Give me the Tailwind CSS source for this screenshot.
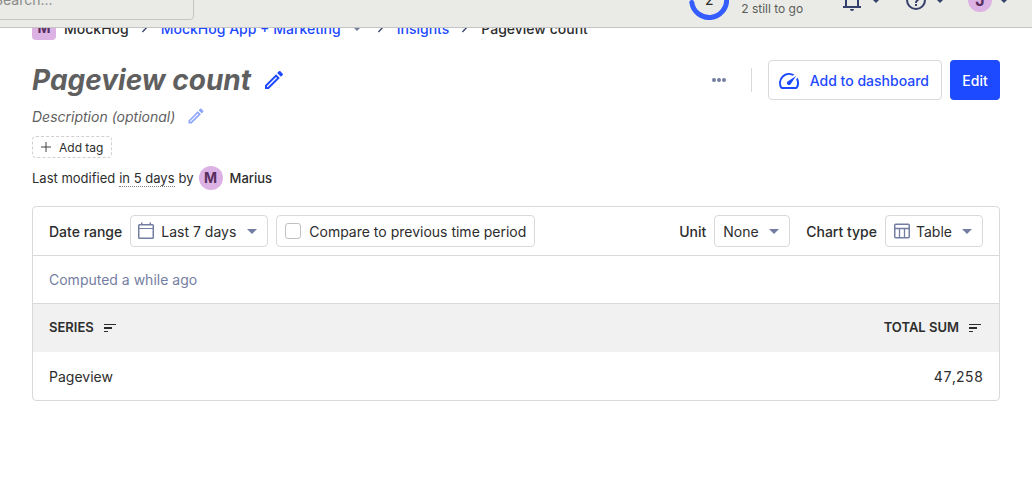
<!DOCTYPE html>
<html lang="en">
<head>
<meta charset="utf-8">
<meta name="viewport" content="width=device-width, initial-scale=1">
<title>Pageview count</title>
<script src="https://cdn.jsdelivr.net/npm/@tailwindcss/browser@4"></script>
</head>
<body class="bg-white font-['Inter',sans-serif] text-sm text-[#2d2d2d]">
<svg class="hidden">
  <symbol id="caret" viewBox="0 0 24 24"><path d="M7 10l5 5 5-5z" fill="currentColor"/></symbol>
  <symbol id="chevron" viewBox="0 0 24 24"><path d="M9 15.500L13.200 11 9 6.500l.9-1 5.100 5.500-5.100 5.500z" fill="currentColor"/></symbol>
  <symbol id="pencil" viewBox="0 0 24 24"><path d="M14.06 9.02l.92.92L5.92 19H5v-.92l9.06-9.06M17.66 3c-.25 0-.51.1-.7.29l-1.83 1.83 3.75 3.75 1.83-1.83c.39-.39.39-1.02 0-1.41l-2.34-2.34c-.2-.2-.45-.29-.71-.29zm-3.6 3.19L3 17.25V21h3.75L17.81 9.94l-3.75-3.75z" fill="currentColor"/></symbol>
  <symbol id="sort" viewBox="0 0 12 8"><path d="M0 0h12v1H0zM0 3h8v2H0zM0 7h4v1H0z" fill="currentColor"/></symbol>
</svg>

<header class="flex h-7 items-end overflow-hidden border-b border-[#c3c4c4] bg-[#eaebe6]">
  <div class="flex h-[54px] w-full shrink-0 items-center pr-4">
    <input type="search" aria-label="Search" placeholder="Search..." class="-ml-14 h-10 w-[250px] rounded border border-[#c3c4c4] pb-px pl-[49px] text-sm placeholder:text-[#8a8b88]">
    <div class="ml-auto flex items-center">
      <div class="relative size-10">
        <svg viewBox="0 0 40 40" class="size-10" fill="none" stroke="#345cff" stroke-width="5" stroke-linecap="round"><path d="M2.8 22.5A17.5 17.5 0 1 0 20 2.5"/></svg>
        <span class="absolute inset-0 flex items-center justify-center text-sm">2</span>
      </div>
      <div class="mt-[2px] ml-3 flex flex-col text-xs leading-4 text-[#5a5b59]"><span class="font-semibold">Get started</span><span>2 still to go</span></div>
      <button aria-label="Notifications" class="ml-[34px] flex items-center text-[#35416b]">
        <svg viewBox="0 0 24 24" class="size-6"><path d="M5 8a7 7 0 0 1 14 0v10h2v2H3v-2h2zm2 10h10V8A5 5 0 0 0 7 8zM10 21h4a2 2 0 0 1-4 0z" fill="currentColor"/></svg>
        <svg class="size-6"><use href="#caret"/></svg>
      </button>
      <button aria-label="Help" class="ml-4 flex items-center text-[#35416b]">
        <svg viewBox="0 0 24 24" class="size-6"><path d="M11 18h2v-2h-2zM12 2a10 10 0 1 0 0 20 10 10 0 0 0 0-20zm0 18a8 8 0 1 1 0-16 8 8 0 0 1 0 16zm0-14a4 4 0 0 0-4 4h2a2 2 0 1 1 4 0c0 2-3 1.750-3 5h2c0-2.250 3-2.500 3-5a4 4 0 0 0-4-4z" fill="currentColor"/></svg>
        <svg class="size-6"><use href="#caret"/></svg>
      </button>
      <button aria-label="Account" class="ml-4 flex items-center text-[#35416b]">
        <span class="flex size-6 items-center justify-center rounded-full bg-[#dcb1e3] text-base font-bold text-[#572e5e]">J</span>
        <svg class="size-6"><use href="#caret"/></svg>
      </button>
    </div>
  </div>
</header>

<main class="px-8">
  <div class="flex h-3 items-end overflow-hidden">
    <nav aria-label="Breadcrumb" class="flex h-6 shrink-0 items-center font-medium">
      <span class="mr-2 flex size-6 items-center justify-center rounded bg-[#dcb1e3] text-sm font-bold text-[#572e5e]">M</span>
      <span class="pt-[2px]">MockHog</span>
      <svg class="mx-1 size-6 text-[#35416b]"><use href="#chevron"/></svg>
      <a href="#" class="flex items-center pt-[2px] text-[#1d4aff]">MockHog App + Marketing
        <svg class="ml-2 size-4 text-[#747ea2]"><use href="#caret"/></svg></a>
      <svg class="mx-1 size-6 text-[#35416b]"><use href="#chevron"/></svg>
      <a href="#" class="pt-[2px] text-[#1d4aff]">Insights</a>
      <svg class="mx-1 size-6 text-[#35416b]"><use href="#chevron"/></svg>
      <span class="pt-[2px]">Pageview count</span>
    </nav>
  </div>

  <div class="mt-5 flex h-10 items-center">
    <h1 class="text-[28px] leading-10 font-bold text-[#5f5f5f] italic">Pageview count</h1>
    <button aria-label="Edit name" class="ml-[11px] text-[#1d4aff]"><svg class="size-6"><use href="#pencil"/></svg></button>
    <button aria-label="More" class="ml-auto text-[#747ea2]"><svg viewBox="0 0 24 24" class="size-6" fill="currentColor"><circle cx="7" cy="12" r="2"/><circle cx="12" cy="12" r="2"/><circle cx="17" cy="12" r="2"/></svg></button>
    <div class="mx-4 ml-5 h-6 w-px bg-[#d9d9d9]"></div>
    <button class="flex h-10 items-center rounded border border-[#d9d9d9] pt-px pr-3 pl-2 font-medium text-[#1d4aff]">
      <svg viewBox="0 0 24 24" class="mr-[9px] size-6"><path d="M20.380 8.570l-1.230 1.850a8 8 0 0 1-.22 7.580H5.070A8 8 0 0 1 15.580 6.850l1.850-1.230A10 10 0 0 0 3.350 19a2 2 0 0 0 1.720 1h13.850a2 2 0 0 0 1.740-1 10 10 0 0 0-.27-10.440zM10.590 15.410a2 2 0 0 0 2.830 0l5.660-8.490-8.490 5.660a2 2 0 0 0 0 2.830z" fill="currentColor"/></svg>Add to dashboard</button>
    <button class="ml-2 h-10 w-[50px] rounded bg-[#1d4aff] pt-[2px] text-center font-medium text-white">Edit</button>
  </div>

  <div class="mt-1 flex h-6 items-center text-[#5f5f5f] italic"><span class="pt-[2px]">Description (optional)</span>
    <button aria-label="Edit description" class="ml-[11px] text-[#8ea4ff]"><svg class="size-5"><use href="#pencil"/></svg></button>
  </div>
  <button class="mt-2 flex h-[22px] items-center gap-2 rounded border border-dashed border-[#d0d0d0] px-2 text-xs">
    <svg viewBox="0 0 10 10" class="size-[10px]" stroke="#404040" fill="none"><path d="M5 0v10M0 5h10"/></svg><span class="pt-px">Add tag</span></button>
  <div class="mt-2 flex h-6 items-center gap-1 text-[13px]">
    <span>Last modified</span><span class="mt-px border-b border-dotted border-[#808080] leading-4">in 5 days</span><span>by</span>
    <span class="ml-px flex size-6 items-center justify-center rounded-full bg-[#dcb1e3] text-sm font-bold text-[#572e5e]">M</span>
    <span class="ml-[3px] font-medium">Marius</span>
  </div>

  <section class="mt-4 rounded border border-[#d9d9d9]">
    <div class="flex h-12 items-center gap-2 px-4 whitespace-nowrap">
      <label for="range" class="pt-[2px] font-medium">Date range</label>
      <div class="relative flex items-center">
        <svg viewBox="0 0 24 24" class="pointer-events-none absolute left-1 size-6 text-[#747ea2]"><path d="M18.500 5H17V3.500h-1.500V5h-7V3.500H7V5H5.500A1.500 1.500 0 0 0 4 6.500v12A1.500 1.500 0 0 0 5.500 20h13a1.500 1.500 0 0 0 1.500-1.500v-12A1.500 1.500 0 0 0 18.500 5zm0 13.500h-13V10h13zm0-9.500h-13V6.500h13z" fill="currentColor"/></svg>
        <select id="range" class="h-8 appearance-none rounded border border-[#d9d9d9] pt-[2px] pr-[30px] pl-[30px]"><option>Last 7 days</option></select>
        <svg class="pointer-events-none absolute right-1 size-6 text-[#747ea2]"><use href="#caret"/></svg>
      </div>
      <label class="flex h-8 items-center gap-2 rounded border border-[#d9d9d9] px-2"><input type="checkbox" class="size-4 appearance-none rounded-[3px] border border-[#c0c0c0]"><span class="pt-[2px]">Compare to previous time period</span></label>
      <label for="unit" class="ml-auto pt-[2px] font-medium">Unit</label>
      <div class="relative mr-2 flex items-center">
        <select id="unit" class="h-8 appearance-none rounded border border-[#d9d9d9] pt-[2px] pr-[30px] pl-2"><option>None</option></select>
        <svg class="pointer-events-none absolute right-1 size-6 text-[#747ea2]"><use href="#caret"/></svg>
      </div>
      <label for="chart" class="pt-[2px] font-medium">Chart type</label>
      <div class="relative flex items-center">
        <svg viewBox="0 0 16 16" class="pointer-events-none absolute left-[9px] size-4 text-[#747ea2]" fill="none" stroke="currentColor"><rect x=".75" y="1.250" width="14.500" height="13.500" rx="1" stroke-width="1.500"/><path d="M1 5.500h14M5.500 5.500v9M10.500 5.500v9" stroke-width="1.300"/></svg>
        <select id="chart" class="h-8 appearance-none rounded border border-[#d9d9d9] pt-[2px] pr-[30px] pl-[30px]"><option>Table</option></select>
        <svg class="pointer-events-none absolute right-1 size-6 text-[#747ea2]"><use href="#caret"/></svg>
      </div>
    </div>
    <div class="flex h-12 items-center border-t border-[#d9d9d9] px-4 text-[#747ea2]">Computed a while ago</div>
    <table class="w-full border-t border-[#d9d9d9]">
      <thead class="bg-[#f1f1f1] text-[13px]"><tr class="h-12">
        <th class="px-4 text-left font-semibold"><span class="inline-flex items-center gap-[10px]">SERIES <svg class="h-2 w-3"><use href="#sort"/></svg></span></th>
        <th class="px-4 text-right font-semibold"><span class="inline-flex items-center gap-[10px]">TOTAL SUM <svg class="mr-[2px] h-2 w-3"><use href="#sort"/></svg></span></th>
      </tr></thead>
      <tbody><tr class="h-12"><td class="px-4 pt-[2px]">Pageview</td><td class="px-4 pt-[2px] text-right tabular-nums">47,258</td></tr></tbody>
    </table>
  </section>
</main>
</body>
</html>
